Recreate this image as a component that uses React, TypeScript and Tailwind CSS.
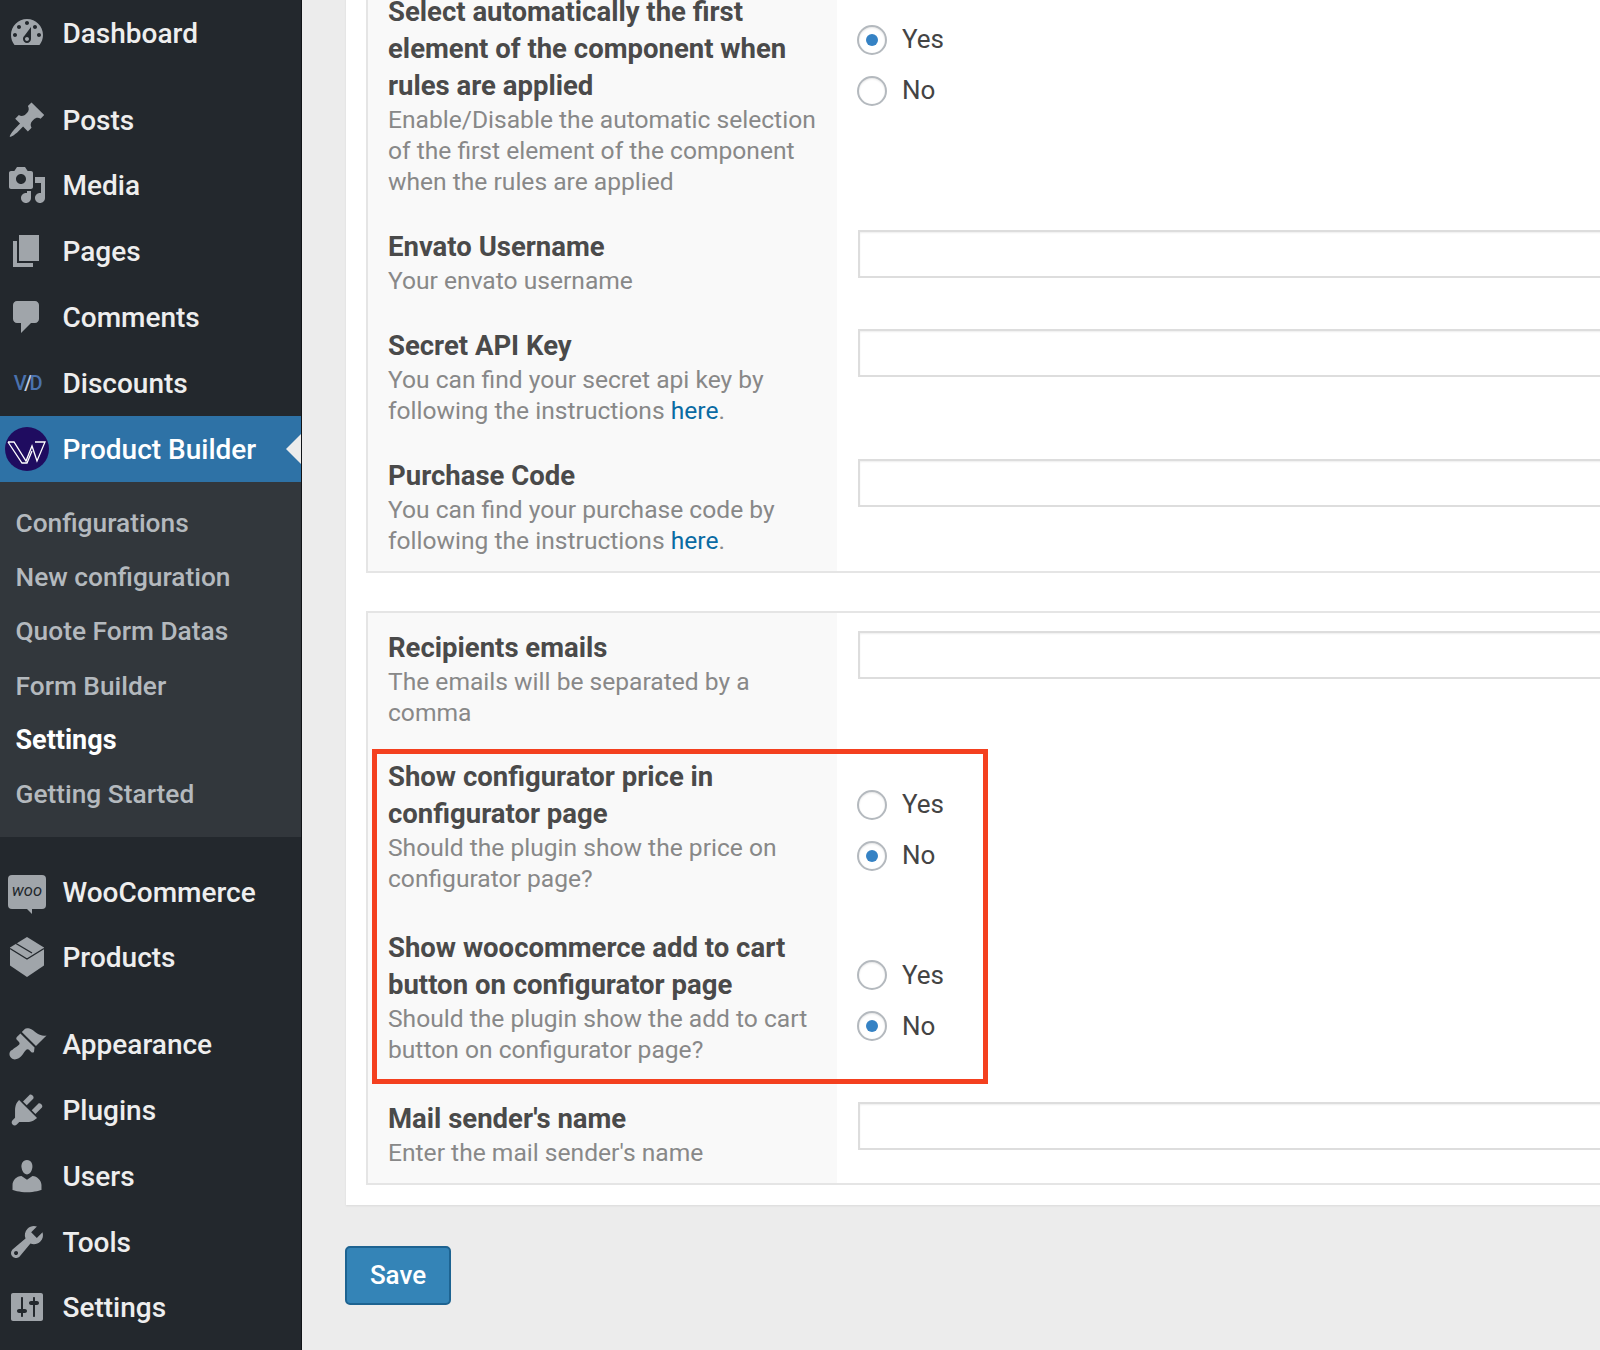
const font = "font-['Roboto','Liberation_Sans',sans-serif]";

const iconPaths: Record<string, string> = {
  dashboard:
    "M3.76 16h12.48c1.1-1.37 1.76-3.11 1.76-5 0-4.42-3.58-8-8-8s-8 3.58-8 8c0 1.89.66 3.63 1.76 5zM10 4c.55 0 1 .45 1 1s-.45 1-1 1-1-.45-1-1 .45-1 1-1zM6 6c.55 0 1 .45 1 1s-.45 1-1 1-1-.45-1-1 .45-1 1-1zm8 0c.55 0 1 .45 1 1s-.45 1-1 1-1-.45-1-1 .45-1 1-1zm-5.37 5.55L12 7v6c0 1.1-.9 2-2 2s-2-.9-2-2c0-.57.24-1.08.63-1.45zM4 10c.55 0 1 .45 1 1s-.45 1-1 1-1-.45-1-1 .45-1 1-1zm12 0c.55 0 1 .45 1 1s-.45 1-1 1-1-.45-1-1 .45-1 1-1zm-5 3c0-.55-.45-1-1-1s-1 .45-1 1 .45 1 1 1 1-.45 1-1z",
  posts:
    "M10.44 3.02l1.82-1.82 6.36 6.35-1.83 1.82c-1.05-.68-2.48-.57-3.41.36l-.75.75c-.92.93-1.04 2.35-.35 3.41l-1.83 1.82-2.41-2.41-2.8 2.79c-.42.42-3.38 2.71-3.8 2.29s1.86-3.39 2.28-3.81l2.79-2.79L4.1 9.36l1.83-1.82c1.05.69 2.48.57 3.4-.36l.75-.75c.93-.92 1.05-2.35.36-3.41z",
  media:
    "M13 11V4c0-.55-.45-1-1-1h-1.67L9 1H5L3.67 3H2c-.55 0-1 .45-1 1v7c0 .55.45 1 1 1h10c.55 0 1-.45 1-1zM7 4.5c1.38 0 2.5 1.12 2.5 2.5S8.38 9.5 7 9.5 4.5 8.38 4.5 7 5.62 4.5 7 4.5zM14 6h5v10.5c0 1.38-1.12 2.5-2.5 2.5S14 17.88 14 16.5s1.12-2.5 2.5-2.5c.17 0 .34.02.5.05V9h-3V6zm-4 8.05V13h2v3.5c0 1.38-1.12 2.5-2.5 2.5S7 17.88 7 16.5 8.12 14 9.5 14c.17 0 .34.02.5.05z",
  pages: "M6 15V2h10v13H6zm-1 1h8v2H3V5h2v11z",
  comments:
    "M5 2h9c1.1 0 2 .9 2 2v7c0 1.1-.9 2-2 2h-2l-5 5v-5H5c-1.1 0-2-.9-2-2V4c0-1.1.9-2 2-2z",
  appearance:
    "M14.48 11.06L7.41 3.99l1.5-1.5c.5-.56 2.3-.47 3.51.32 1.21.8 1.43 1.28 2.91 2.1 1.18.64 2.45 1.26 4.45.85zm-.71.71L6.7 4.7 4.93 6.47c-.39.39-.39 1.02 0 1.41l1.06 1.06c.39.39.39 1.03 0 1.42-.6.6-1.43 1.11-2.21 1.69-.35.26-.7.53-1.01.84C1.43 13.23.5 15.37 2.04 16.9s3.7.6 5.04-.75c.31-.31.58-.66.84-1.01.58-.78 1.09-1.61 1.69-2.21.39-.39 1.02-.39 1.41 0l1.06 1.06c.39.39 1.02.39 1.41 0z",
  plugins:
    "M13.11 4.36L9.87 7.6 8 5.73l3.24-3.24c.35-.34 1.05-.2 1.56.32.52.51.66 1.21.31 1.55zm-8 1.77l.91-1.12 9.01 9.01-1.19.84c-.71.71-2.63 1.16-3.82 1.16H6.14L4.9 17.26c-.59.59-1.54.59-2.12 0-.59-.58-.59-1.53 0-2.12l1.24-1.24v-3.88c0-1.13.4-3.19 1.09-3.89zm7.26 3.97l3.24-3.24c.34-.35 1.04-.21 1.55.31.52.51.66 1.21.31 1.55l-3.24 3.25z",
  users:
    "M10 9.25c-2.27 0-2.73-3.44-2.73-3.44C7 4.02 7.82 2 9.97 2c2.16 0 2.98 2.02 2.71 3.81 0 0-.41 3.44-2.68 3.44zm0 2.57L12.72 10c2.39 0 4.52 2.33 4.52 4.53v2.49s-3.65 1.13-7.24 1.13c-3.65 0-7.24-1.13-7.24-1.13v-2.49c0-2.25 1.94-4.48 4.47-4.48z",
  tools:
    "M16.68 9.77c-1.34 1.34-3.3 1.67-4.95.99l-5.41 6.52c-.99.99-2.59.99-3.58 0s-.99-2.59 0-3.57l6.52-5.42c-.68-1.65-.35-3.61.99-4.95 1.28-1.28 3.12-1.62 4.72-1.06l-2.89 2.89 2.82 2.82 2.86-2.87c.53 1.58.18 3.39-1.08 4.65zM3.81 16.21c.4.39 1.04.39 1.43 0 .4-.4.4-1.04 0-1.43-.39-.4-1.03-.4-1.43 0-.39.39-.39 1.03 0 1.43z",
  settings:
    "M18 16V4c0-.55-.45-1-1-1H3c-.55 0-1 .45-1 1v12c0 .55.45 1 1 1h14c.55 0 1-.45 1-1zM8 11h1c.55 0 1 .45 1 1s-.45 1-1 1H8v1.5c0 .28-.22.5-.5.5s-.5-.22-.5-.5V13H6c-.55 0-1-.45-1-1s.45-1 1-1h1V5.5c0-.28.22-.5.5-.5s.5.22.5.5V11zm5-2h-1c-.55 0-1-.45-1-1s.45-1 1-1h1V5.5c0-.28.22-.5.5-.5s.5.22.5.5V7h1c.55 0 1 .45 1 1s-.45 1-1 1h-1v5.5c0 .28-.22.5-.5.5s-.5-.22-.5-.5V9z",
};

function Dashicon({ name }: { name: string }) {
  return (
    <svg viewBox="0 0 20 20" className="h-10 w-10 fill-[#a0a5aa]">
      <path d={iconPaths[name]} />
    </svg>
  );
}

function BoxIcon() {
  return (
    <svg viewBox="0 0 34 40" className="h-10 w-[34px]">
      <path d="M17 0l17 10.5v18L17 40 0 28.500v-18z" fill="#a0a5aa" />
      <path d="M0 11.500l17 10.500 17-10.500M6 6.500l16 9.500" fill="none" stroke="#23282d" strokeWidth="1.4" />
    </svg>
  );
}

function WooIcon() {
  return (
    <span className="relative flex h-[34px] w-[38px] items-center justify-center rounded-[4px] bg-[#a0a5aa]">
      <span className="text-[16.5px] italic leading-none text-[#23282d]">woo</span>
      <span className="absolute -bottom-[5px] left-[19px] h-0 w-0 border-l-[5px] border-t-[5px] border-l-transparent border-t-[#a0a5aa]" />
    </span>
  );
}

function DiscountIcon() {
  return (
    <span className="text-[20px] font-medium leading-none tracking-[-2.5px] text-[#4a72ae]">
      V<span className="text-[#c3cfe0]">/</span>D
    </span>
  );
}

function BuilderLogo() {
  return (
    <svg viewBox="0 0 44 44" className="h-[44px] w-[44px]">
      <circle cx="22" cy="22" r="22" fill="#1f0c60" />
      <path
        d="M3 15h6l12 19 6-15 5 15 8-19H30M3 15l14 21h5l5-12"
        fill="none"
        stroke="#ffffff"
        strokeWidth="1.3"
      />
    </svg>
  );
}

function MenuItem({ icon, label, active }: { icon: React.ReactNode; label: string; active?: boolean }) {
  return (
    <div
      className={`relative flex h-[65.8px] items-center ${active ? "bg-[#2e72a6] text-white" : "text-[#eeeeee]"}`}
    >
      <span className="flex w-[54px] shrink-0 items-center justify-center">{icon}</span>
      <span className="ml-[8.5px] whitespace-nowrap pt-[2px] text-[28px] font-medium leading-none">{label}</span>
      {active && (
        <span className="absolute right-0 top-[18px] h-0 w-0 border-y-[15px] border-r-[15px] border-y-transparent border-r-[#ececec]" />
      )}
    </div>
  );
}

function Sidebar() {
  const sub = ["Configurations", "New configuration", "Quote Form Datas", "Form Builder", "Settings", "Getting Started"];
  return (
    <aside className="h-[1350px] w-[302px] shrink-0 border-r border-[#111417] bg-[#23282d]">
      <MenuItem icon={<Dashicon name="dashboard" />} label="Dashboard" />
      <div className="h-[21px]" />
      <MenuItem icon={<Dashicon name="posts" />} label="Posts" />
      <MenuItem icon={<Dashicon name="media" />} label="Media" />
      <MenuItem icon={<Dashicon name="pages" />} label="Pages" />
      <MenuItem icon={<Dashicon name="comments" />} label="Comments" />
      <MenuItem icon={<DiscountIcon />} label="Discounts" />
      <MenuItem icon={<BuilderLogo />} label="Product Builder" active />
      <div className="bg-[#32373c] py-[15px]">
        {sub.map((s) => (
          <div
            key={s}
            className={`flex h-[54.2px] items-center pl-[15.5px] ${s === "Settings" ? "text-[27px] font-bold text-white" : "text-[26.3px] font-medium text-[#b4b9be]"}`}
          >
            {s}
          </div>
        ))}
      </div>
      <div className="h-[22px]" />
      <MenuItem icon={<WooIcon />} label="WooCommerce" />
      <MenuItem icon={<BoxIcon />} label="Products" />
      <div className="h-[21px]" />
      <MenuItem icon={<Dashicon name="appearance" />} label="Appearance" />
      <MenuItem icon={<Dashicon name="plugins" />} label="Plugins" />
      <MenuItem icon={<Dashicon name="users" />} label="Users" />
      <MenuItem icon={<Dashicon name="tools" />} label="Tools" />
      <MenuItem icon={<Dashicon name="settings" />} label="Settings" />
    </aside>
  );
}

function Radio({ checked, label }: { checked?: boolean; label: string }) {
  return (
    <div className="flex h-[51px] items-center">
      <span className="flex h-[30px] w-[30px] items-center justify-center rounded-full border-2 border-[#b4b9be] bg-white shadow-[inset_0_1px_2px_rgba(0,0,0,0.1)]">
        {checked && <span className="h-[12px] w-[12px] rounded-full bg-[#3582c4]" />}
      </span>
      <span className="ml-[15px] text-[26px] text-[#444444]">{label}</span>
    </div>
  );
}

function RadioPair({ value, top = "pt-[37px]" }: { value: "yes" | "no"; top?: string }) {
  return (
    <div className={`pl-[20px] ${top}`}>
      <Radio label="Yes" checked={value === "yes"} />
      <Radio label="No" checked={value === "no"} />
    </div>
  );
}

function TextInput() {
  return (
    <div className="pl-[20.5px] pt-[18px]">
      <div className="h-[48px] w-[800px] border-2 border-[#dddddd] bg-white shadow-[inset_0_1px_2px_rgba(0,0,0,0.07)]" />
    </div>
  );
}

function Row({
  title,
  desc,
  height,
  children,
}: {
  title: string[];
  desc: React.ReactNode[];
  height: string;
  children: React.ReactNode;
}) {
  return (
    <div className={`flex ${height}`}>
      <div className="w-[469px] shrink-0 bg-[#f9f9f9] pl-[20px] pt-[16px]">
        {title.map((t) => (
          <div key={t} className="whitespace-nowrap text-[27.5px] font-bold leading-[37px] text-[#4a4a4a]">
            {t}
          </div>
        ))}
        {desc.map((d, i) => (
          <div key={i} className="whitespace-nowrap text-[24.6px] leading-[31px] text-[#888888]">
            {d}
          </div>
        ))}
      </div>
      <div className="flex-1">{children}</div>
    </div>
  );
}

const hereLink = <span className="text-[#0a6ba3]">here</span>;

export default function App() {
  return (
    <div className={`flex h-[1350px] w-[1600px] overflow-hidden bg-[#ececec] ${font}`}>
      <Sidebar />
      <main className="flex-1 pl-[44px]">
        <div className="-mt-[25px] w-[1400px] bg-white pb-[20px] pl-[20px] shadow-[0_1px_2px_rgba(0,0,0,0.08)]">
          <div className="border-2 border-[#e5e5e5]">
            <Row
              height="h-[235px]"
              title={["Select automatically the first", "element of the component when", "rules are applied"]}
              desc={[
                "Enable/Disable the automatic selection",
                "of the first element of the component",
                "when the rules are applied",
              ]}
            >
              <RadioPair value="yes" />
            </Row>
            <Row height="h-[99px]" title={["Envato Username"]} desc={["Your envato username"]}>
              <TextInput />
            </Row>
            <Row
              height="h-[129.5px]"
              title={["Secret API Key"]}
              desc={["You can find your secret api key by", <>following the instructions {hereLink}.</>]}
            >
              <TextInput />
            </Row>
            <Row
              height="h-[130.5px]"
              title={["Purchase Code"]}
              desc={["You can find your purchase code by", <>following the instructions {hereLink}.</>]}
            >
              <TextInput />
            </Row>
          </div>
          <div className="mt-[38px] border-2 border-[#e5e5e5]">
            <Row height="h-[129px]" title={["Recipients emails"]} desc={["The emails will be separated by a", "comma"]}>
              <TextInput />
            </Row>
            <div className="relative">
              <Row
                height="h-[170.5px]"
                title={["Show configurator price in", "configurator page"]}
                desc={["Should the plugin show the price on", "configurator page?"]}
              >
                <RadioPair value="no" />
              </Row>
              <Row
                height="h-[171.5px]"
                title={["Show woocommerce add to cart", "button on configurator page"]}
                desc={["Should the plugin show the add to cart", "button on configurator page?"]}
              >
                <RadioPair value="no" />
              </Row>
              <div className="absolute left-[3.5px] top-[7px] h-[335px] w-[616.5px] border-[5px] border-[#f4401f]" />
            </div>
            <Row height="h-[99px]" title={["Mail sender's name"]} desc={["Enter the mail sender's name"]}>
              <TextInput />
            </Row>
          </div>
        </div>
        <button className="-ml-px mt-[41px] flex h-[59px] w-[106px] items-center justify-center rounded-[5px] border-2 border-[#1d6391] bg-[#3484b7] text-[26px] font-medium text-white">
          Save
        </button>
      </main>
    </div>
  );
}
